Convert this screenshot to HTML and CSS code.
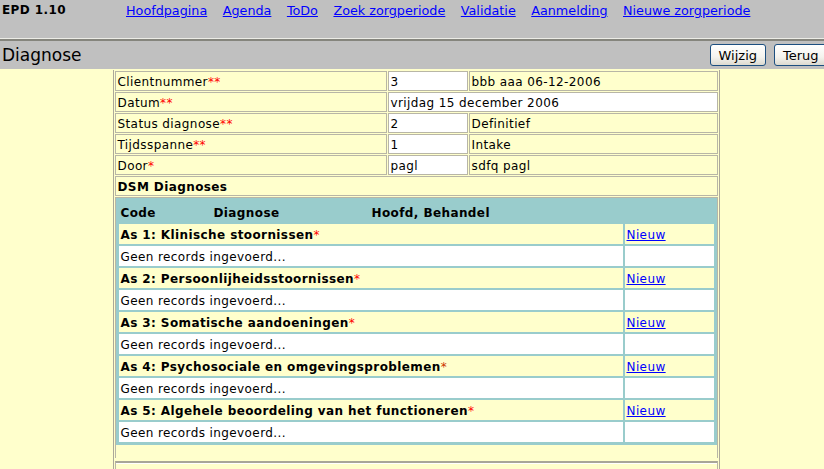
FILE: index.html
```html
<!DOCTYPE html>
<html lang="nl">
<head>
<meta charset="utf-8">
<title>Diagnose</title>
<link rel="stylesheet" href="styles.css">
</head>
<body>
<div class="page">
  <header class="topbar">
    <span class="brand">EPD 1.10</span>
    <nav class="nav">
      <a href="#">Hoofdpagina</a>
      <a href="#">Agenda</a>
      <a href="#">ToDo</a>
      <a href="#">Zoek zorgperiode</a>
      <a href="#">Validatie</a>
      <a href="#">Aanmelding</a>
      <a href="#">Nieuwe zorgperiode</a>
    </nav>
  </header>
  <div class="rule"></div>
  <div class="titlebar">
    <h1 class="title">Diagnose</h1>
    <div class="actions">
      <button class="btn" type="button">Wijzig</button>
      <button class="btn btn-back" type="button">Terug</button>
    </div>
  </div>
  <main class="content">
    <table class="form">
      <colgroup>
        <col class="col-label">
        <col class="col-value">
        <col class="col-desc">
      </colgroup>
      <tr>
        <td class="label">Clientnummer<span class="req">**</span></td>
        <td class="value">3</td>
        <td class="desc">bbb aaa 06-12-2006</td>
      </tr>
      <tr>
        <td class="label">Datum<span class="req">**</span></td>
        <td class="value" colspan="2">vrijdag 15 december 2006</td>
      </tr>
      <tr>
        <td class="label">Status diagnose<span class="req">**</span></td>
        <td class="value">2</td>
        <td class="desc">Definitief</td>
      </tr>
      <tr>
        <td class="label">Tijdsspanne<span class="req">**</span></td>
        <td class="value">1</td>
        <td class="desc">Intake</td>
      </tr>
      <tr>
        <td class="label">Door<span class="req">*</span></td>
        <td class="value">pagl</td>
        <td class="desc">sdfq pagl</td>
      </tr>
      <tr>
        <td class="section" colspan="3">DSM Diagnoses</td>
      </tr>
      <tr>
        <td class="holder" colspan="3">
          <table class="dsm">
            <colgroup>
              <col class="col-code">
              <col class="col-diag">
              <col class="col-main">
              <col class="col-new">
            </colgroup>
            <tr class="head">
              <th>Code</th>
              <th>Diagnose</th>
              <th>Hoofd, Behandel</th>
              <th></th>
            </tr>
            <tr class="axis">
              <td colspan="3">As 1: Klinische stoornissen<span class="req">*</span></td>
              <td><a href="#">Nieuw</a></td>
            </tr>
            <tr class="empty">
              <td colspan="3">Geen records ingevoerd...</td>
              <td></td>
            </tr>
            <tr class="axis">
              <td colspan="3">As 2: Persoonlijheidsstoornissen<span class="req">*</span></td>
              <td><a href="#">Nieuw</a></td>
            </tr>
            <tr class="empty">
              <td colspan="3">Geen records ingevoerd...</td>
              <td></td>
            </tr>
            <tr class="axis">
              <td colspan="3">As 3: Somatische aandoeningen<span class="req">*</span></td>
              <td><a href="#">Nieuw</a></td>
            </tr>
            <tr class="empty">
              <td colspan="3">Geen records ingevoerd...</td>
              <td></td>
            </tr>
            <tr class="axis">
              <td colspan="3">As 4: Psychosociale en omgevingsproblemen<span class="req dark">*</span></td>
              <td><a href="#">Nieuw</a></td>
            </tr>
            <tr class="empty">
              <td colspan="3">Geen records ingevoerd...</td>
              <td></td>
            </tr>
            <tr class="axis">
              <td colspan="3">As 5: Algehele beoordeling van het functioneren<span class="req">*</span></td>
              <td><a href="#">Nieuw</a></td>
            </tr>
            <tr class="empty">
              <td colspan="3">Geen records ingevoerd...</td>
              <td></td>
            </tr>
          </table>
        </td>
      </tr>
      <tr class="spacer">
        <td colspan="3"></td>
      </tr>
      <tr>
        <td class="next" colspan="3"></td>
      </tr>
    </table>
  </main>
</div>
</body>
</html>
```

FILE: styles.css
```css
html, body {
  margin: 0;
  padding: 0;
  background: #ffffcc;
  overflow: hidden;
}

body {
  font-family: "DejaVu Sans", Verdana, sans-serif;
  font-size: 12px;
  letter-spacing: 0.4px;
  color: #000;
}

.page {
  width: 832px;
}

.topbar {
  display: flex;
  align-items: flex-start;
  height: 35px;
  padding: 3px 0 0 2px;
  background: #c0c0c0;
}

.brand {
  flex: 0 0 124px;
  font-weight: bold;
  font-size: 12px;
  line-height: 15px;
}

.nav {
  display: flex;
  gap: 15.5px;
  letter-spacing: 0;
}

.nav a {
  color: #0000ff;
  font-size: 12.75px;
  line-height: 15px;
}

.rule {
  height: 0;
  border-top: 1px solid #ecece6;
  border-bottom: 2px solid #85857d;
}

.titlebar {
  display: flex;
  align-items: center;
  justify-content: space-between;
  height: 28px;
  padding: 0 0 0 2px;
  background: #c0c0c0;
  letter-spacing: 0;
}

.title {
  margin: 0;
  font-size: 17px;
  font-weight: normal;
  line-height: 20px;
}

.actions {
  display: flex;
  gap: 8px;
}

.btn {
  height: 22px;
  padding: 0 8px;
  font-family: "DejaVu Sans", Verdana, sans-serif;
  font-size: 13px;
  color: #000;
  border: 1px solid #1c4f80;
  border-radius: 3px;
  background: linear-gradient(#ffffff, #f4f3ee 60%, #dcdad0);
}

.btn-back {
  min-width: 58px;
  text-align: left;
}

.content {
  padding-top: 1px;
}

.form {
  table-layout: fixed;
  width: 607px;
  margin: 0 auto;
  border-collapse: separate;
  border-spacing: 1px;
  border-left: 1px solid #aca899;
  border-right: 1px solid #aca899;
}

.col-label { width: 272px; }
.col-value { width: 80px; }
.col-desc { width: 249px; }

.form td {
  height: 14px;
  padding: 3px 2px 1px;
  border: 1px solid #b8b6a6;
  line-height: 14px;
  white-space: nowrap;
  overflow: hidden;
}

.label, .desc, .section {
  background: #ffffcc;
}

.value {
  background: #ffffff;
}

.section {
  font-weight: bold;
}

.req {
  color: #ff0000;
  font-weight: normal;
}

.req.dark {
  color: #cc3300;
}

.form td.holder {
  padding: 0 0 13px 0;
  border-bottom: none;
  background: #ffffcc;
}

.form tr.spacer td {
  height: 1px;
  padding: 0;
  border: none;
}

.form td.next {
  height: 40px;
  border-top: 2px solid #a8a698;
  box-shadow: inset 0 1px 0 #ffffff;
}

.dsm {
  table-layout: fixed;
  width: 601px;
  border-collapse: separate;
  border-spacing: 2px;
  border: 1px solid #99cccc;
  background: #99cccc;
}

.col-code { width: 91px; }
.col-diag { width: 156px; }
.col-main { width: 253px; }
.col-new { width: 89px; }

.dsm th,
.dsm td {
  height: 14px;
  padding: 4px 2px 2px;
  line-height: 14px;
  text-align: left;
  white-space: nowrap;
  overflow: hidden;
  border: none;
}

.dsm th {
  font-weight: bold;
}

.dsm .head th {
  padding-top: 5px;
  padding-bottom: 2px;
}

.axis td {
  background: #ffffcc;
  font-weight: bold;
}

.axis td a {
  font-weight: normal;
  color: #0000ff;
}

.empty td {
  background: #ffffff;
}
```
